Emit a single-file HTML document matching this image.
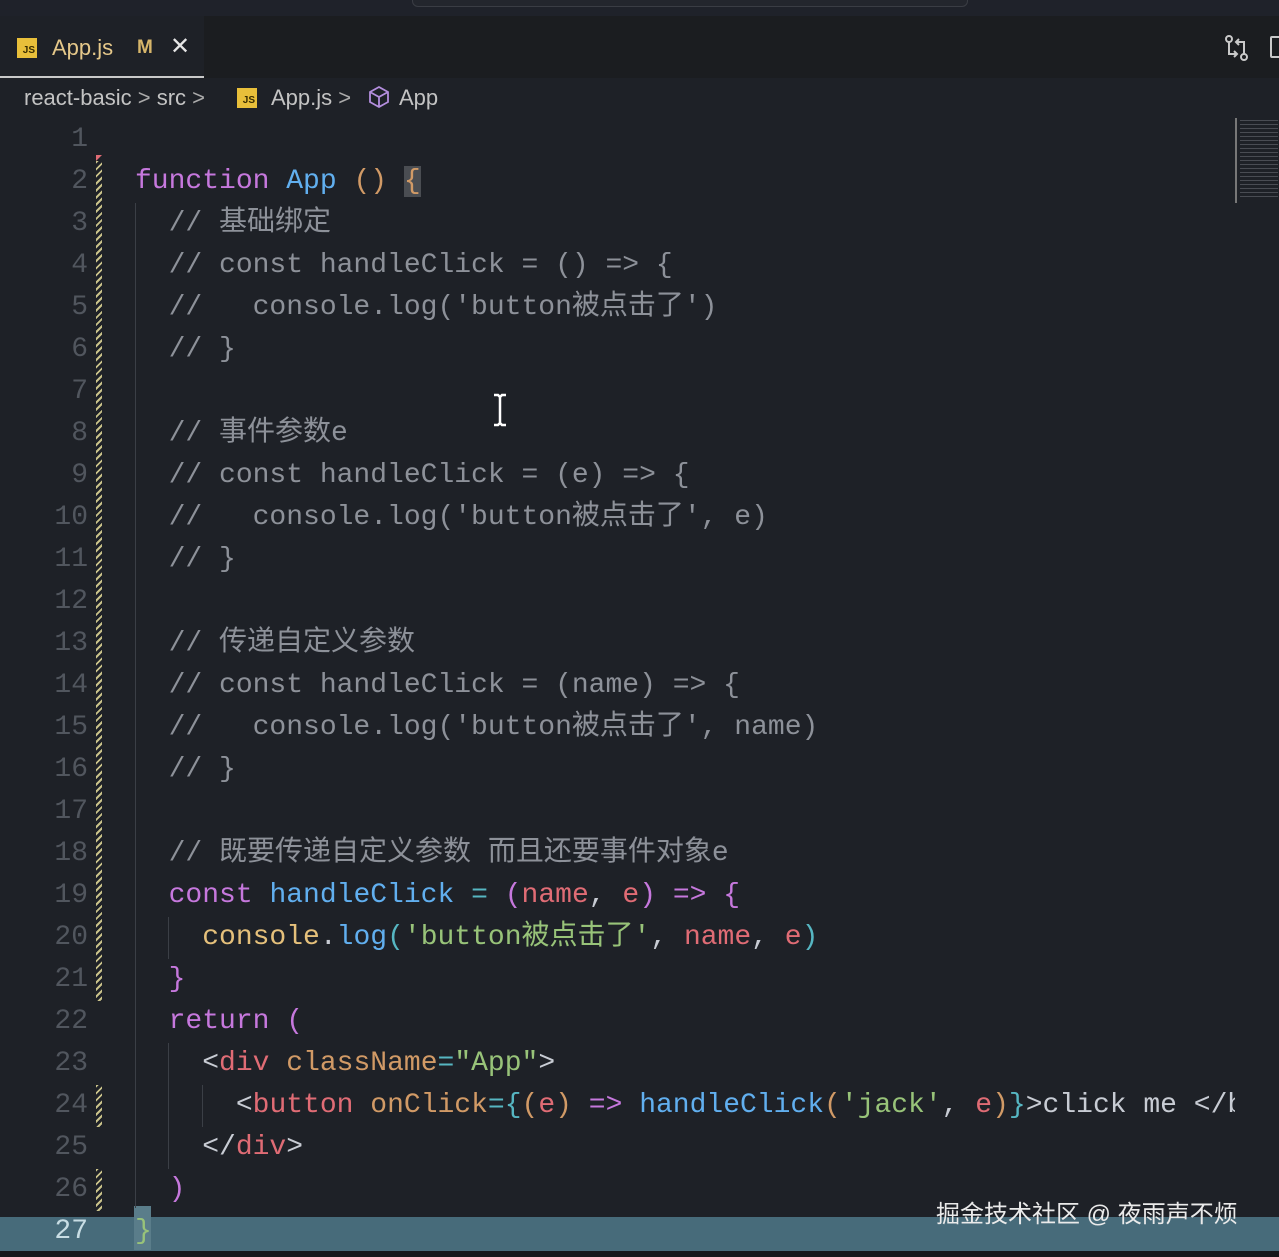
<!DOCTYPE html>
<html style="width:1279px;height:1257px;overflow:hidden;background:#1e2127"><head><meta charset="utf-8"><style>
*{margin:0;padding:0;box-sizing:border-box}
body{width:1279px;height:1257px;background:#1e2127;overflow:hidden;font-family:"Liberation Sans","Noto Sans CJK SC",sans-serif}
#w{position:relative;width:1279px;height:1257px;overflow:hidden}
.top{position:absolute;left:0;top:0;width:1279px;height:16px;background:#1f222a}
.pill{position:absolute;left:412px;top:-10px;width:556px;height:17px;border:1px solid #3a3d44;border-radius:6px;background:#23262d}
.tabbar{position:absolute;left:0;top:16px;width:1279px;height:62px;background:#1b1d20}
.tab{position:absolute;left:0;top:16px;width:204px;height:62px;background:#1e2127;border-bottom:2px solid #c9c9c9}
.js{position:absolute;width:20px;height:20px;background:#e8bf3a;color:#3a2e00;font:bold 10px "Liberation Sans",sans-serif;text-align:right;padding:7px 2px 0 0;line-height:12px}
.tabt{position:absolute;left:52px;top:35px;font-size:22px;color:#e5c88a}
.mm{position:absolute;left:137px;top:37px;font-size:19px;color:#d6b56a;font-weight:bold}
.x{position:absolute;left:170px;top:32px;font-size:24px;color:#e6e6e6}
.bc{position:absolute;top:85px;font-size:22px;color:#c3c3c3;white-space:pre}
.code{position:absolute;left:0;top:3px;font-family:"Liberation Mono","Noto Sans CJK SC",monospace;font-size:28px;white-space:pre}
.ln{position:absolute;width:88px;text-align:right;color:#51565e;font-family:"Liberation Mono",monospace;font-size:28px;height:42px;line-height:42px}
.l{position:absolute;left:135px;height:42px;line-height:42px}
.c{color:#8d9199}.k{color:#c678dd}.f{color:#61afef}.o{color:#d19a66}.p{color:#56b6c2}.r{color:#e06c75}.y{color:#e5c07b}.s{color:#98c379}.w{color:#c8ccd4}.t{color:#e06c75}
.g{position:absolute;left:96px;width:6px;background:repeating-linear-gradient(135deg,#c9c28a 0 2px,transparent 2px 5px)}
.guide{position:absolute;width:1px;background:#3b3f46}
</style></head><body><div id="w">
<div class="top"></div><div class="pill"></div>
<div class="tabbar"></div>
<div class="tab"></div>
<div class="js" style="left:17px;top:38px">JS</div>
<div class="tabt">App.js</div><div class="mm">M</div><div class="x">✕</div>
<svg style="position:absolute;left:1224px;top:34px" width="26" height="28" viewBox="0 0 26 28" fill="none" stroke="#c9c9c9" stroke-width="2"><circle cx="5" cy="5" r="3"/><circle cx="20" cy="23" r="3"/><path d="M5 8v12h8M10 17l3 3-3 3M20 20V8h-8M15 5l-3 3 3 3"/></svg>
<div style="position:absolute;left:1270px;top:36px;width:12px;height:22px;border:2px solid #c9c9c9;border-radius:2px"></div>
<div class="bc" style="left:24px">react-basic <span style="color:#aaa">&gt;</span> src <span style="color:#aaa">&gt;</span></div>
<div class="js" style="left:237px;top:88px">JS</div>
<div class="bc" style="left:271px">App.js <span style="color:#aaa">&gt;</span></div>
<svg style="position:absolute;left:368px;top:85px" width="22" height="24" viewBox="0 0 22 24" fill="none" stroke="#b48ede" stroke-width="1.8"><path d="M11 2l9 5v10l-9 5-9-5V7z M2 7l9 5 9-5 M11 12v10"/></svg>
<div class="bc" style="left:399px">App</div>
<div style="position:absolute;left:1235px;top:118px;width:2px;height:85px;background:#777"></div>
<div style="position:absolute;left:1240px;top:120px;width:38px;height:80px;background:repeating-linear-gradient(180deg,#5b5f66 0 1px,transparent 1px 4px);opacity:.7"></div>
<div style="position:absolute;left:0;top:1217px;width:1279px;height:34px;background:#476b7a"></div>
<div style="position:absolute;left:0;top:1251px;width:1279px;height:6px;background:#15171a"></div>
<div style="position:absolute;left:134px;top:1206px;width:17px;height:44px;background:#5a7d8a"></div>
<div style="position:absolute;left:936px;top:1194px;font-size:24px;color:#eaeaea;white-space:pre">掘金技术社区 @ 夜雨声不烦</div>
<div class="guide" style="left:135px;top:203px;height:1005px"></div>
<div class="guide" style="left:168px;top:917px;height:42px"></div>
<div class="guide" style="left:168px;top:1043px;height:126px"></div>
<div class="guide" style="left:202px;top:1085px;height:42px"></div>
<div class="g" style="top:161px;height:840px"></div>
<div class="g" style="top:1085px;height:42px"></div>
<div class="g" style="top:1169px;height:42px"></div>
<div style="position:absolute;left:96px;top:155px;width:0;height:0;border-top:6px solid #e06c75;border-right:6px solid transparent"></div>
<div class="code">
<div class="ln" style="top:116px">1</div>
<div class="ln" style="top:158px">2</div>
<div class="ln" style="top:200px">3</div>
<div class="ln" style="top:242px">4</div>
<div class="ln" style="top:284px">5</div>
<div class="ln" style="top:326px">6</div>
<div class="ln" style="top:368px">7</div>
<div class="ln" style="top:410px">8</div>
<div class="ln" style="top:452px">9</div>
<div class="ln" style="top:494px">10</div>
<div class="ln" style="top:536px">11</div>
<div class="ln" style="top:578px">12</div>
<div class="ln" style="top:620px">13</div>
<div class="ln" style="top:662px">14</div>
<div class="ln" style="top:704px">15</div>
<div class="ln" style="top:746px">16</div>
<div class="ln" style="top:788px">17</div>
<div class="ln" style="top:830px">18</div>
<div class="ln" style="top:872px">19</div>
<div class="ln" style="top:914px">20</div>
<div class="ln" style="top:956px">21</div>
<div class="ln" style="top:998px">22</div>
<div class="ln" style="top:1040px">23</div>
<div class="ln" style="top:1082px">24</div>
<div class="ln" style="top:1124px">25</div>
<div class="ln" style="top:1166px">26</div>
<div class="ln" style="top:1208px;color:#c8dde4">27</div>

<div class="l" style="top:158px"><span class="k">function</span> <span class="f">App</span> <span class="o">()</span> <span class="o" style="background:#4a4d52">{</span></div>
<div class="l c" style="top:200px">  // 基础绑定</div>
<div class="l c" style="top:242px">  // const handleClick = () =&gt; {</div>
<div class="l c" style="top:284px">  //   console.log('button被点击了')</div>
<div class="l c" style="top:326px">  // }</div>
<div class="l c" style="top:410px">  // 事件参数e</div>
<div class="l c" style="top:452px">  // const handleClick = (e) =&gt; {</div>
<div class="l c" style="top:494px">  //   console.log('button被点击了', e)</div>
<div class="l c" style="top:536px">  // }</div>
<div class="l c" style="top:620px">  // 传递自定义参数</div>
<div class="l c" style="top:662px">  // const handleClick = (name) =&gt; {</div>
<div class="l c" style="top:704px">  //   console.log('button被点击了', name)</div>
<div class="l c" style="top:746px">  // }</div>
<div class="l c" style="top:830px">  // 既要传递自定义参数 而且还要事件对象e</div>
<div class="l" style="top:872px">  <span class="k">const</span> <span class="f">handleClick</span> <span class="p">=</span> <span class="k">(</span><span class="r">name</span><span class="w">,</span> <span class="r">e</span><span class="k">)</span> <span class="k">=&gt;</span> <span class="k">{</span></div>
<div class="l" style="top:914px">    <span class="y">console</span><span class="w">.</span><span class="f">log</span><span class="p">(</span><span class="s">'button被点击了'</span><span class="w">,</span> <span class="r">name</span><span class="w">,</span> <span class="r">e</span><span class="p">)</span></div>
<div class="l" style="top:956px">  <span class="k">}</span></div>
<div class="l" style="top:998px">  <span class="k">return</span> <span class="k">(</span></div>
<div class="l" style="top:1040px">    <span class="w">&lt;</span><span class="t">div</span> <span class="o">className</span><span class="p">=</span><span class="s">"App"</span><span class="w">&gt;</span></div>
<div class="l" style="top:1082px;width:1100px;overflow:hidden">      <span class="w">&lt;</span><span class="t">button</span> <span class="o">onClick</span><span class="p">={</span><span class="o">(</span><span class="r">e</span><span class="o">)</span> <span class="k">=&gt;</span> <span class="f">handleClick</span><span class="o">(</span><span class="s">'jack'</span><span class="w">,</span> <span class="r">e</span><span class="o">)</span><span class="p">}</span><span class="w">&gt;click me &lt;/b</span></div>
<div class="l" style="top:1124px">    <span class="w">&lt;/</span><span class="t">div</span><span class="w">&gt;</span></div>
<div class="l" style="top:1166px">  <span class="k">)</span></div>
<div class="l" style="top:1208px"><span class="s">}</span></div>
</div>
<svg style="position:absolute;left:490px;top:392px" width="20" height="36" viewBox="0 0 20 36" fill="none" stroke="#fff" stroke-width="2.5"><path d="M4 3h4l2 2 2-2h4M10 5v26M4 33h4l2-2 2 2h4"/></svg>
</div></body></html>
